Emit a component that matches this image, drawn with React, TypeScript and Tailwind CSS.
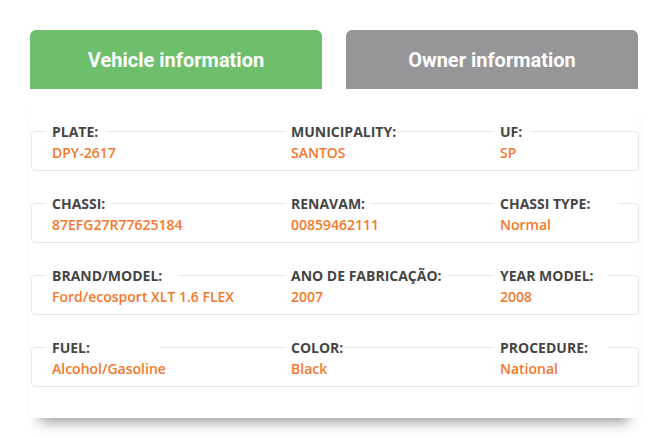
type Field = { label: string; value: string; gap: string };

const rows: Field[][] = [
  [
    { label: "PLATE:", value: "DPY-2617", gap: "w-[62px]" },
    { label: "MUNICIPALITY:", value: "SANTOS", gap: "w-[106px]" },
    { label: "UF:", value: "SP", gap: "w-[37px]" },
  ],
  [
    { label: "CHASSI:", value: "87EFG27R77625184", gap: "w-[67px]" },
    { label: "RENAVAM:", value: "00859462111", gap: "w-[86px]" },
    { label: "CHASSI TYPE:", value: "Normal", gap: "w-[124px]" },
  ],
  [
    { label: "BRAND/MODEL:", value: "Ford/ecosport XLT 1.6 FLEX", gap: "w-[133px]" },
    { label: "ANO DE FABRICAÇÃO:", value: "2007", gap: "w-[163px]" },
    { label: "YEAR MODEL:", value: "2008", gap: "w-[113px]" },
  ],
  [
    { label: "FUEL:", value: "Alcohol/Gasoline", gap: "w-[114px]" },
    { label: "COLOR:", value: "Black", gap: "w-[58px]" },
    { label: "PROCEDURE:", value: "National", gap: "w-[115px]" },
  ],
];

function InfoRow({ fields }: { fields: Field[] }) {
  return (
    <div className="h-[40px] border border-[#e8e8e8] rounded-[4px] grid grid-cols-[239px_209px_1fr] pl-[14px]">
      {fields.map((f) => (
        <div key={f.label} className="flex flex-col">
          <span
            className={`${f.gap} -mt-[10px] bg-white pl-[6px] text-[14px] leading-[20px] font-bold text-[#454545] whitespace-nowrap`}
          >
            {f.label}
          </span>
          <span className="mt-[1px] pl-[6px] text-[14px] leading-[20px] font-semibold text-[#f6772a] whitespace-nowrap">
            {f.value}
          </span>
        </div>
      ))}
    </div>
  );
}

export default function App() {
  return (
    <div className="w-[669px] h-[438px] bg-white px-[30px] pt-[30px] font-['Open_Sans',sans-serif]">
      <div className="flex gap-[24px]">
        <div className="w-[292px] h-[59px] pt-[1px] rounded-t-[6px] bg-[#6ebf6b] flex items-center justify-center text-white text-[20px] font-bold font-['Roboto',sans-serif]">
          Vehicle information
        </div>
        <div className="w-[292px] h-[59px] pt-[1px] rounded-t-[6px] bg-[#969698] flex items-center justify-center text-white text-[20px] font-bold font-['Roboto',sans-serif]">
          Owner information
        </div>
      </div>
      <div className="w-[609px] h-[329px] bg-white pt-[42px] pl-[1px] flex flex-col gap-[32px] shadow-[0_14px_12px_-10px_rgba(0,0,0,0.4)]">
        {rows.map((r, i) => (
          <InfoRow key={i} fields={r} />
        ))}
      </div>
    </div>
  );
}
